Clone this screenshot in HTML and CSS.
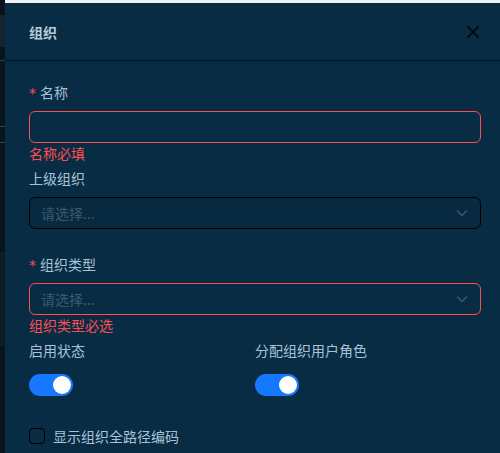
FILE: index.html
```html
<!DOCTYPE html>
<html lang="zh-CN">
<head>
<meta charset="utf-8">
<title>组织</title>
<link rel="stylesheet" href="styles.css">
</head>
<body>
<div class="page">
  <aside class="backdrop">
    <div class="bd-tab"></div>
    <div class="bd-line bd-l1"></div>
    <div class="bd-line bd-l2"></div>
    <div class="bd-line bd-l3"></div>
    <div class="bd-band"></div>
  </aside>
  <main class="stage">
    <section class="modal">
      <header class="modal-header">
        <h2 class="modal-title">组织</h2>
        <button class="close" aria-label="关闭">
          <svg width="14" height="14" viewBox="0 0 14 14"><path d="M1.5 1.5 L12.5 12.5 M12.5 1.5 L1.5 12.5" stroke="#000" stroke-width="1.6" fill="none"/></svg>
        </button>
      </header>
      <div class="modal-body">
        <div class="item item-err">
          <label class="label"><span class="req">*</span>名称</label>
          <div class="input error"></div>
          <div class="explain">名称必填</div>
        </div>
        <div class="item">
          <label class="label">上级组织</label>
          <div class="input select dark">
            <span class="ph">请选择...</span>
            <svg class="chev" width="12" height="8" viewBox="0 0 12 8"><path d="M1 1.5 L6 6.5 L11 1.5" stroke="#3a5a72" stroke-width="1.3" fill="none"/></svg>
          </div>
        </div>
        <div class="item item-err">
          <label class="label"><span class="req">*</span>组织类型</label>
          <div class="input select error">
            <span class="ph">请选择...</span>
            <svg class="chev" width="12" height="8" viewBox="0 0 12 8"><path d="M1 1.5 L6 6.5 L11 1.5" stroke="#3a5a72" stroke-width="1.3" fill="none"/></svg>
          </div>
          <div class="explain">组织类型必选</div>
        </div>
        <div class="row">
          <div class="item">
            <label class="label">启用状态</label>
            <div class="ctrl"><span class="switch"><span class="knob"></span></span></div>
          </div>
          <div class="item">
            <label class="label">分配组织用户角色</label>
            <div class="ctrl"><span class="switch"><span class="knob"></span></span></div>
          </div>
        </div>
        <div class="check-row">
          <span class="checkbox"></span>
          <span class="check-label">显示组织全路径编码</span>
        </div>
      </div>
    </section>
  </main>
</div>
</body>
</html>
```

FILE: styles.css
```css
* { box-sizing: border-box; }
html, body {
  margin: 0;
  padding: 0;
  width: 500px;
  height: 453px;
  overflow: hidden;
  font-family: "Noto Sans CJK SC", "Noto Sans", sans-serif;
  font-size: 14px;
}
.page {
  display: flex;
  width: 500px;
  height: 453px;
  background: #0b1520;
}
.backdrop {
  position: relative;
  width: 5px;
  flex: none;
  background: #0a131d;
  overflow: hidden;
}
.bd-tab {
  position: absolute;
  top: 15px;
  left: 0;
  width: 5px;
  height: 32px;
  background: #142330;
}
.bd-line { position: absolute; left: 0; width: 5px; height: 1px; background: #1b4a72; }
.bd-l1 { top: 60px; }
.bd-l2 { top: 126px; }
.bd-l3 { top: 142px; }
.bd-band {
  position: absolute;
  left: 0; top: 252px; width: 5px; height: 94px;
  background: #0d1b27;
  border-top: 1px solid #14222e;
  border-bottom: 1px solid #14222e;
}
.stage {
  flex: 1;
  background: #eef0f2;
  padding-top: 3px;
  overflow: hidden;
}
.modal {
  width: 500px;
  height: 470px;
  background: #082c44;
}
.modal-header {
  height: 58px;
  padding: 0 24px;
  display: flex;
  align-items: center;
  justify-content: space-between;
  border-bottom: 1px solid #02101b;
}
.modal-title {
  margin: 0;
  font-size: 14px;
  font-weight: 700;
  line-height: 22px;
  color: #b4cbdc;
}
.close {
  border: 0;
  background: transparent;
  padding: 0;
  margin-right: 1px;
  width: 14px;
  height: 14px;
  display: flex;
}
.modal-body {
  padding: 20px 24px 0 24px;
}
.item { margin-bottom: 24px; }
.item-err { margin-bottom: 4px; }
.label {
  display: block;
  line-height: 22px;
  height: 22px;
  color: #a9c3d6;
  margin-bottom: 8px;
}
.req {
  color: #ff4d4f;
  margin-right: 4px;
  font-family: "DejaVu Sans", sans-serif;
  font-size: 14px;
}
.input {
  height: 32px;
  border: 1px solid #000;
  border-radius: 6px;
  background: #072a40;
  display: flex;
  align-items: center;
  padding: 0 11px;
}
.input.error { border-color: #ff4d4f; background: #082c44; }
.input.dark { border-color: #000; }
.select { justify-content: space-between; }
.ph { color: #3a5a72; line-height: 22px; }
.chev { margin-right: 1px; }
.explain {
  color: #ff4d4f;
  line-height: 20px;
  height: 20px;
}
.row {
  display: grid;
  grid-template-columns: 1fr 1fr;
}
.ctrl {
  height: 32px;
  display: flex;
  align-items: center;
}
.switch {
  position: relative;
  display: inline-block;
  width: 44px;
  height: 22px;
  border-radius: 11px;
  background: #1677ff;
}
.knob {
  position: absolute;
  top: 2px;
  left: 24px;
  width: 18px;
  height: 18px;
  border-radius: 50%;
  background: #fff;
}
.check-row {
  display: flex;
  align-items: center;
  height: 22px;
}
.checkbox {
  width: 16px;
  height: 16px;
  border: 1px solid #000;
  border-radius: 4px;
}
.check-label {
  margin-left: 8px;
  color: #a9c3d6;
  line-height: 22px;
}
```
